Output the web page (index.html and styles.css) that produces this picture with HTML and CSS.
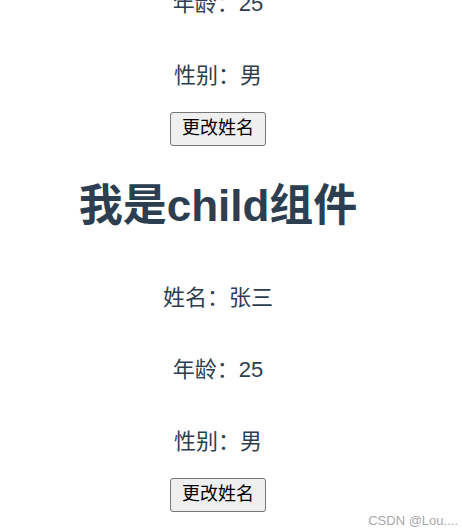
FILE: index.html
```html
<!DOCTYPE html>
<html lang="zh-CN">
<head>
<meta charset="utf-8">
<title>child</title>
<link rel="stylesheet" href="styles.css">
</head>
<body>
<div class="app">
  <div class="section">
    <p class="field first">年龄：25</p>
    <p class="field">性别：男</p>
    <button class="btn">更改姓名</button>
  </div>
  <div class="section">
    <h1 class="title">我是child组件</h1>
    <p class="field">姓名：张三</p>
    <p class="field">年龄：25</p>
    <p class="field">性别：男</p>
    <button class="btn">更改姓名</button>
  </div>
</div>
<div class="watermark">CSDN @Lou....</div>
</body>
</html>
```
FILE: styles.css
```css
html, body {
  margin: 0;
  padding: 0;
  background: #ffffff;
  overflow: hidden;
}
body {
  width: 462px;
  height: 532px;
  position: relative;
}
.app {
  width: 436px;
  margin-top: -11px;
  text-align: center;
  color: #2c3e50;
  font-family: "Liberation Sans", "Noto Sans CJK SC", sans-serif;
}
.section {
  display: flow-root;
}
.field {
  font-size: 22px;
  line-height: 29px;
  margin: 43px 0 22px;
}
.field.first {
  margin-top: 0;
}
.title {
  font-size: 44px;
  line-height: 58px;
  font-weight: bold;
  margin: 31px 0 48px;
}
.btn {
  font-family: "Liberation Sans", "Noto Sans CJK SC", sans-serif;
  font-size: 18px;
  line-height: 23px;
  padding: 4px 11px 5px;
  color: #000;
  background: #efefef;
  border: 1px solid #767676;
  border-radius: 3px;
  margin: 0;
}
.watermark {
  position: absolute;
  right: 4px;
  bottom: 4px;
  font-family: "Liberation Sans", sans-serif;
  font-size: 13px;
  color: #a8a8a8;
}
```
